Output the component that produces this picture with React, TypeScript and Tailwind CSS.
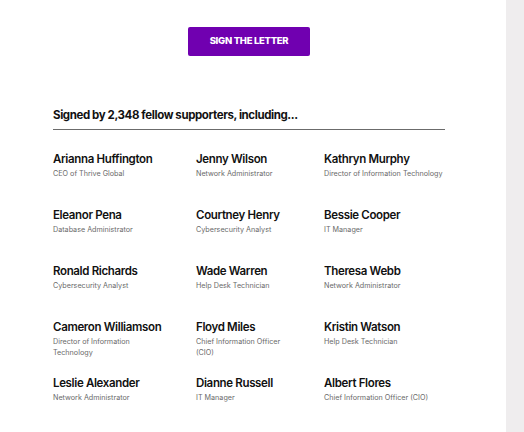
const SIGNERS = [
  { name: 'Arianna Huffington', title: 'CEO of Thrive Global' },
  { name: 'Jenny Wilson', title: 'Network Administrator' },
  { name: 'Kathryn Murphy', title: 'Director of Information Technology' },
  { name: 'Eleanor Pena', title: 'Database Administrator' },
  { name: 'Courtney Henry', title: 'Cybersecurity Analyst' },
  { name: 'Bessie Cooper', title: 'IT Manager' },
  { name: 'Ronald Richards', title: 'Cybersecurity Analyst' },
  { name: 'Wade Warren', title: 'Help Desk Technician' },
  { name: 'Theresa Webb', title: 'Network Administrator' },
  { name: 'Cameron Williamson', title: 'Director of Information Technology' },
  { name: 'Floyd Miles', title: 'Chief Information Officer (CIO)' },
  { name: 'Kristin Watson', title: 'Help Desk Technician' },
  { name: 'Leslie Alexander', title: 'Network Administrator' },
  { name: 'Dianne Russell', title: 'IT Manager' },
  { name: 'Albert Flores', title: 'Chief Information Officer (CIO)' },
]

export default function App() {
  return (
    <div className="flex h-[432px] w-[524px] overflow-hidden bg-white font-['Inter',sans-serif] text-[#111]">
      <main className="w-[506px] pl-[53px] pr-[61px] pt-[27px]">
        <div className="flex justify-center">
          <button className="h-[29px] w-[122px] rounded-[2px] bg-[#7000b0] text-[9.5px] font-extrabold uppercase tracking-[-0.03em] text-white">
            Sign the letter
          </button>
        </div>

        <h2 className="mt-[51px] border-b border-[#6b6b6b] pb-[5px] text-[11.5px] font-bold tracking-[-0.035em]">
          Signed by 2,348 fellow supporters, including...
        </h2>

        <div className="mt-[21px] grid grid-cols-[111px_96px_121px] gap-x-8 gap-y-[20px]">
          {SIGNERS.map((s) => (
            <div key={s.name} className="h-[36px]">
              <p className="text-[11.5px] font-semibold leading-[16px] tracking-[-0.03em]">
                {s.name}
              </p>
              <p className="mt-[1px] text-[7.2px] leading-[11px] text-[#6a6a6a]">
                {s.title}
              </p>
            </div>
          ))}
        </div>
      </main>
      <aside className="flex-1 bg-[#efedee]" />
    </div>
  )
}
